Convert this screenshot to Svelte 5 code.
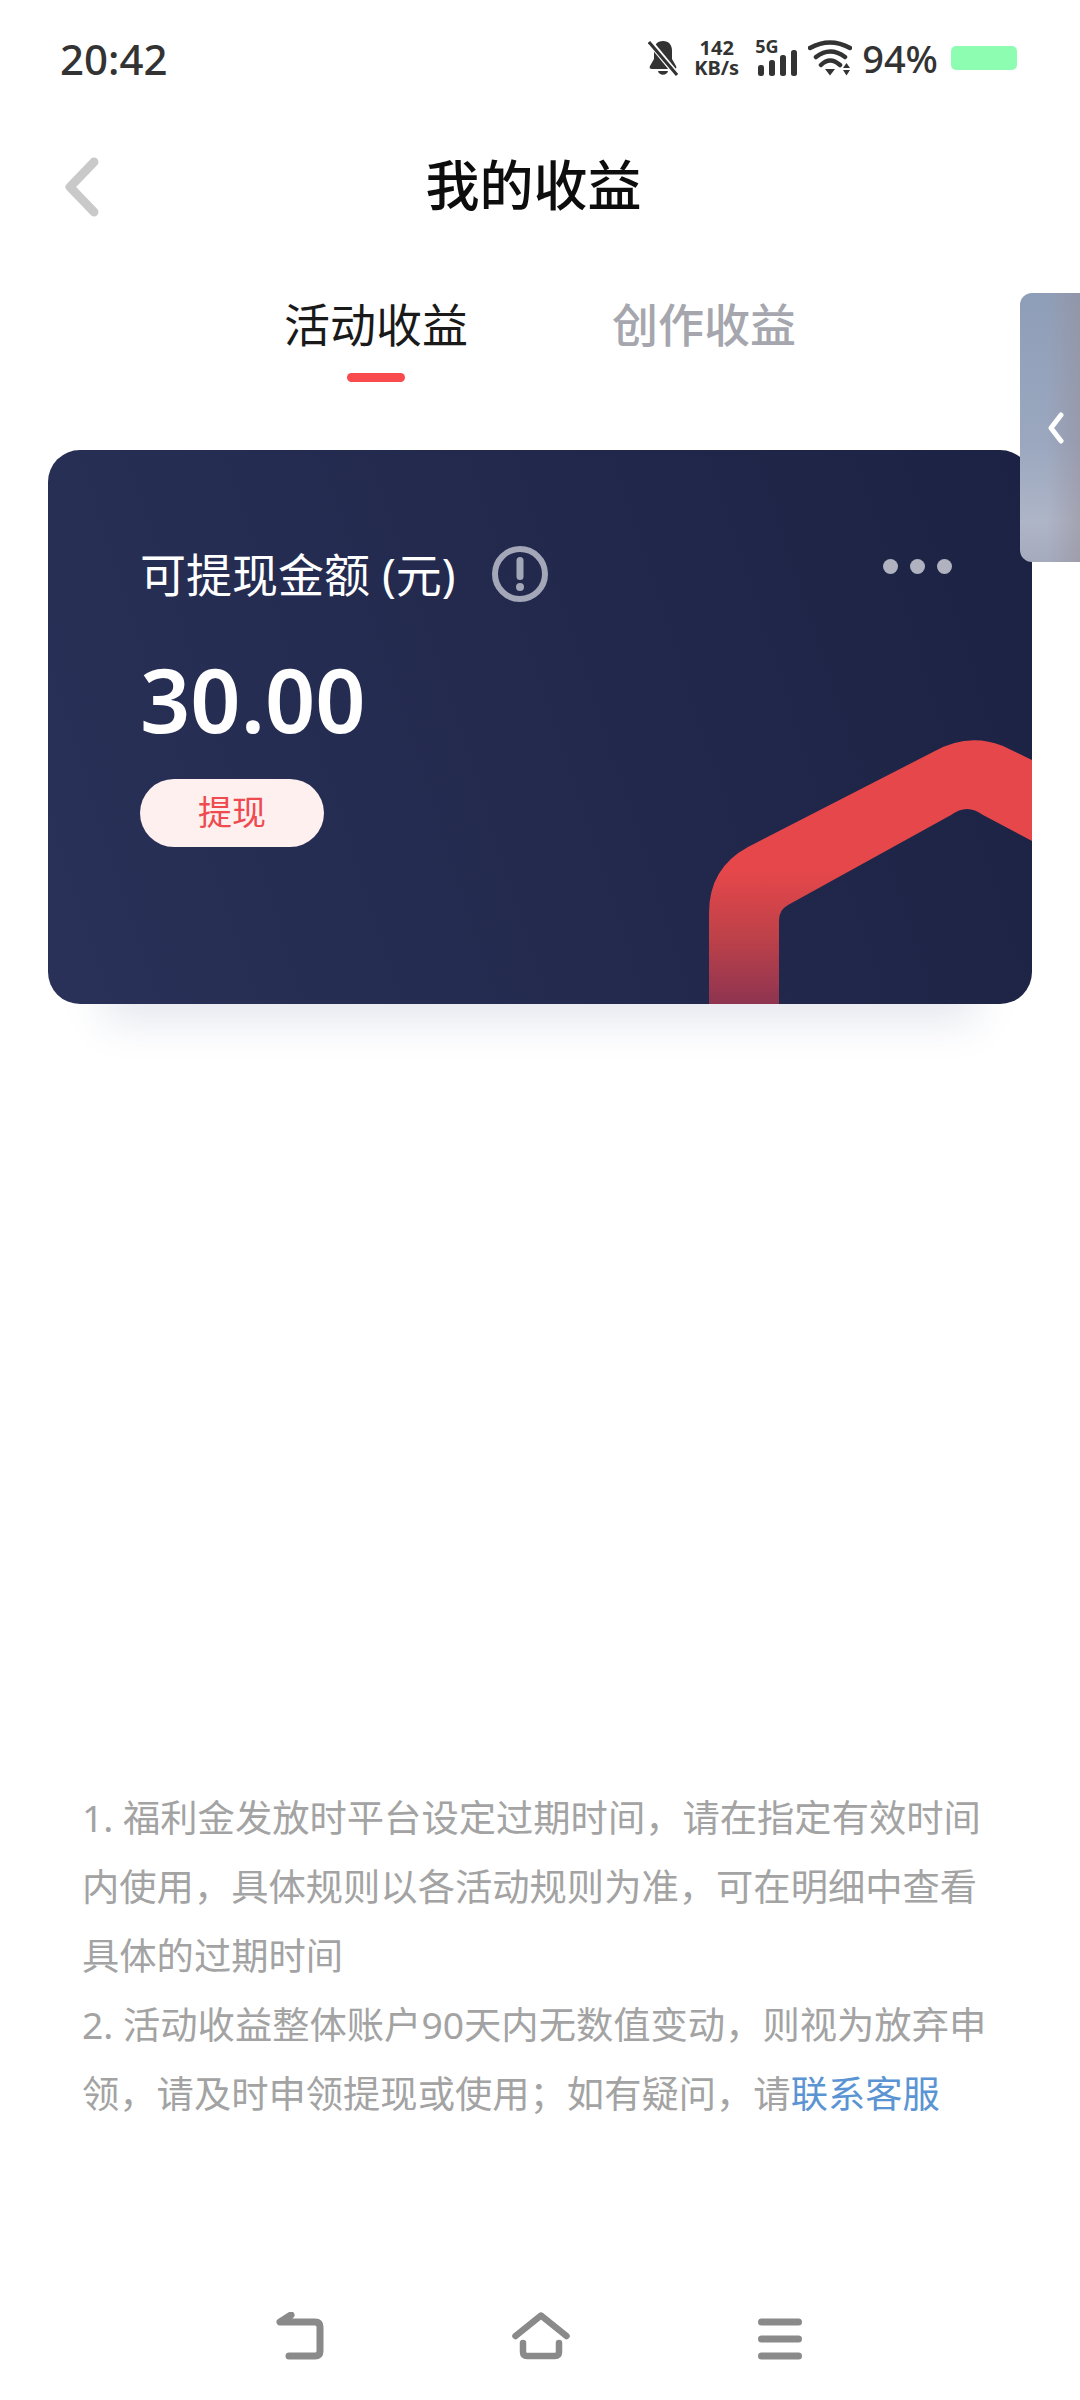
<script>
  const ruleLines = [
    "1. 福利金发放时平台设定过期时间，请在指定有效时间内使用，具体规则以各活动规则为准，可在明细中查看具体的过期时间",
  ];
</script>

<div class="page">
  <!-- Status bar -->
  <div class="status-bar">
    <span class="time">20:42</span>
    <div class="status-right">
      <svg class="bell" width="30" height="36" viewBox="0 0 30 36">
        <path d="M15 1C9 1 6 5 6 11v8l-4 7c-1 2 0 3 2 3h22c2 0 3-1 2-3l-4-7v-8c0-6-3-10-9-10z" fill="#333" />
        <path d="M10 31h10c-1 5-9 5-10 0z" fill="#333" />
        <path d="M1 1l28 34" stroke="#fff" stroke-width="6" />
        <path d="M1 2l28 33" stroke="#333" stroke-width="3" />
      </svg>
      <div class="speed"><span>142</span><span>KB/s</span></div>
      <div class="signal">
        <span class="five-g">5G</span>
        <svg width="41" height="26" viewBox="0 0 41 26">
          <rect x="2" y="15" width="6" height="11" rx="2.5" fill="#333" />
          <rect x="13" y="10" width="6" height="16" rx="2.5" fill="#333" />
          <rect x="24" y="5" width="6" height="21" rx="2.5" fill="#333" />
          <rect x="35" y="0" width="6" height="26" rx="2.5" fill="#333" />
        </svg>
      </div>
      <svg class="wifi" width="44" height="36" viewBox="0 0 44 36">
        <path d="M2 8Q22-3 42 8M8 17Q22 6 37 17M13 25Q22 16 32 25" fill="none" stroke="#333" stroke-width="4.500" stroke-linecap="round" />
        <path d="M17 29h10l-5 6.500zM35 28h7l-3.500-5zM35 30h7l-3.500 5.500z" fill="#333" />
      </svg>
      <span class="percent">94%</span>
      <div class="battery"></div>
    </div>
  </div>

  <!-- Title -->
  <div class="header">
    <svg class="back" width="34" height="60" viewBox="0 0 34 60">
      <path d="M29 5L5 30l24 25" fill="none" stroke="#c9c9c9" stroke-width="9" stroke-linecap="round" stroke-linejoin="round" />
    </svg>
    <h1>我的收益</h1>
  </div>

  <!-- Tabs -->
  <div class="tabs">
    <div class="tab active">
      <span>活动收益</span>
      <i class="indicator"></i>
    </div>
    <div class="tab"><span>创作收益</span></div>
  </div>

  <!-- Balance card -->
  <div class="card">
    <svg class="hex" width="984" height="554" viewBox="0 0 984 554">
      <defs>
        <linearGradient id="hexFill" x1="0" y1="0" x2="0" y2="1">
          <stop offset="0.5" stop-color="#e5474a" />
          <stop offset="0.75" stop-color="#bd4149" />
          <stop offset="1" stop-color="#8e3450" />
        </linearGradient>
      </defs>
      <path
        d="M661 554V463Q661 418 700 397L885 302Q920 282 955 296L984 310V391L935 365Q919 353 903 365L740 455Q731 460 731 470V554Z"
        fill="url(#hexFill)"
      />
    </svg>
    <div class="label-row">
      <span class="label">可提现金额 (元)</span>
      <svg class="info" width="56" height="56" viewBox="0 0 56 56">
        <circle cx="28" cy="28" r="25" fill="none" stroke="#a3a7b8" stroke-width="6" />
        <rect x="24.500" y="11" width="7" height="23" rx="3.500" fill="#a3a7b8" />
        <circle cx="28" cy="41" r="4" fill="#a3a7b8" />
      </svg>
      <div class="dots"><i></i><i></i><i></i></div>
    </div>
    <div class="amount">30.00</div>
    <button class="withdraw">提现</button>
  </div>

  <!-- Rules -->
  <div class="notes">
    {#each ruleLines as line}
      <p>{line}</p>
    {/each}
    <p>2. 活动收益整体账户90天内无数值变动，则视为放弃申领，请及时申领提现或使用；如有疑问，请<span class="link">联系客服</span></p>
  </div>

  <!-- Navigation bar -->
  <div class="nav-bar">
    <svg width="48" height="48" viewBox="0 0 48 48">
      <path d="M15 3L4 10H39Q44 10 44 15V39Q44 44 39 44H13" fill="none" stroke="#8a8a8a" stroke-width="7" stroke-linecap="round" stroke-linejoin="round" />
    </svg>
    <svg width="58" height="48" viewBox="0 0 58 48">
      <path d="M3.500 24L29 3.500 54.500 24" fill="none" stroke="#8a8a8a" stroke-width="6.500" stroke-linecap="round" stroke-linejoin="round" />
      <path d="M11 31v9q0 4 4 4h28q4 0 4-4v-9" fill="none" stroke="#8a8a8a" stroke-width="6.500" stroke-linecap="round" stroke-linejoin="round" />
    </svg>
    <svg width="44" height="48" viewBox="0 0 44 48">
      <path d="M3.500 10h37M3.500 27h37M3.500 44h37" fill="none" stroke="#8a8a8a" stroke-width="7" stroke-linecap="round" />
    </svg>
  </div>

  <!-- Edge handle, floats over the page -->
  <div class="side-tab">
    <svg width="16" height="32" viewBox="0 0 16 32">
      <path d="M13 3L3 16l10 13" fill="none" stroke="#fff" stroke-width="5" stroke-linecap="round" stroke-linejoin="round" />
    </svg>
  </div>
</div>

<style>
  :global(body) {
    margin: 0;
    background: #ffffff;
  }

  .page {
    position: relative;
    width: 1080px;
    height: 2400px;
    display: flex;
    flex-direction: column;
    overflow: hidden;
    background: #ffffff;
    font-family: "Noto Sans", "Noto Sans CJK SC", sans-serif;
  }

  /* Status bar */
  .status-bar {
    height: 116px;
    flex-shrink: 0;
    display: flex;
    align-items: center;
    justify-content: space-between;
    padding: 0 63px 0 60px;
    color: #333333;
  }

  .time {
    font-size: 42px;
    font-weight: 500;
  }

  .status-right {
    display: flex;
    align-items: center;
  }

  .speed {
    display: flex;
    flex-direction: column;
    align-items: center;
    margin-left: 16px;
    font-size: 20px;
    font-weight: 700;
    line-height: 20px;
  }

  .signal {
    position: relative;
    display: flex;
    align-items: flex-end;
    height: 36px;
    margin-left: 17px;
  }

  .five-g {
    position: absolute;
    top: -4px;
    left: -1px;
    font-size: 18px;
    font-weight: 700;
    line-height: 20px;
  }

  .wifi {
    margin-left: 11px;
  }

  .percent {
    margin-left: 10px;
    font-size: 38px;
    font-weight: 500;
  }

  .battery {
    width: 66px;
    height: 24px;
    margin-left: 13px;
    border-radius: 5px;
    background: #8dfdb1;
  }

  /* Title */
  .header {
    position: relative;
    height: 132px;
    flex-shrink: 0;
    display: flex;
    align-items: center;
    justify-content: center;
  }

  .back {
    position: absolute;
    left: 65px;
    top: 41px;
  }

  h1 {
    margin: 0 0 0 -13px;
    font-size: 54px;
    font-weight: 500;
    color: #0d0d0d;
  }

  /* Tabs */
  .tabs {
    display: flex;
    justify-content: center;
    gap: 144px;
    padding-top: 46px;
    flex-shrink: 0;
  }

  .tab {
    display: flex;
    flex-direction: column;
    align-items: center;
    height: 88px;
    font-size: 46px;
    font-weight: 500;
    line-height: 60px;
    color: #a5a6ae;
  }

  .tab.active {
    font-weight: 400;
    color: #1a1a1a;
  }

  .indicator {
    width: 58px;
    height: 9px;
    margin-top: 19px;
    border-radius: 5px;
    background: #f94a4d;
  }

  /* Balance card */
  .card {
    position: relative;
    box-sizing: border-box;
    height: 554px;
    margin: 68px 48px 0;
    padding: 96px 80px 0 92px;
    flex-shrink: 0;
    border-radius: 32px;
    background: linear-gradient(72deg, #2a3158, #1b2243);
    box-shadow: 0 72px 40px -56px rgba(50, 60, 120, 0.13);
  }

  .hex {
    position: absolute;
    left: 0;
    top: 0;
    border-radius: 32px;
  }

  .label-row {
    position: relative;
    display: flex;
    align-items: center;
    height: 56px;
  }

  .label {
    font-size: 46px;
    line-height: 56px;
    color: #ffffff;
  }

  .info {
    margin-left: 36px;
  }

  .dots {
    display: flex;
    gap: 12px;
    margin: -16px 0 0 auto;
  }

  .dots i {
    width: 15px;
    height: 15px;
    border-radius: 50%;
    background: #b0b3bf;
  }

  .amount {
    position: relative;
    margin-top: 47px;
    font-size: 88px;
    font-weight: 600;
    line-height: 100px;
    color: #ffffff;
  }

  .withdraw {
    position: relative;
    display: block;
    width: 184px;
    height: 68px;
    margin-top: 30px;
    padding: 0 0 5px;
    border: none;
    border-radius: 34px;
    background: #fff0f0;
    font-family: inherit;
    font-size: 34px;
    color: #ee4a4f;
  }

  /* Rules */
  .notes {
    margin-top: 779px;
    padding: 0 82px;
    flex-shrink: 0;
    font-size: 37.300px;
    line-height: 69px;
    color: #a3a3a3;
  }

  .notes p {
    margin: 0;
  }

  .link {
    color: #5b94d3;
  }

  /* Navigation bar */
  .nav-bar {
    display: flex;
    align-items: flex-end;
    justify-content: center;
    gap: 188px;
    margin-top: auto;
    padding: 0 3px 40px 0;
  }

  .side-tab {
    position: absolute;
    right: 0;
    top: 293px;
    width: 60px;
    height: 269px;
    display: flex;
    align-items: center;
    justify-content: center;
    padding-left: 12px;
    box-sizing: border-box;
    border-radius: 12px 0 0 12px;
    background:
      linear-gradient(90deg, rgba(143, 157, 182, 0) 45%, rgba(150, 140, 150, 0.45)),
      linear-gradient(180deg, #8f9eb8, #9aa7bf 55%, #aeb5c7 85%, #a5abbd);
  }
</style>
